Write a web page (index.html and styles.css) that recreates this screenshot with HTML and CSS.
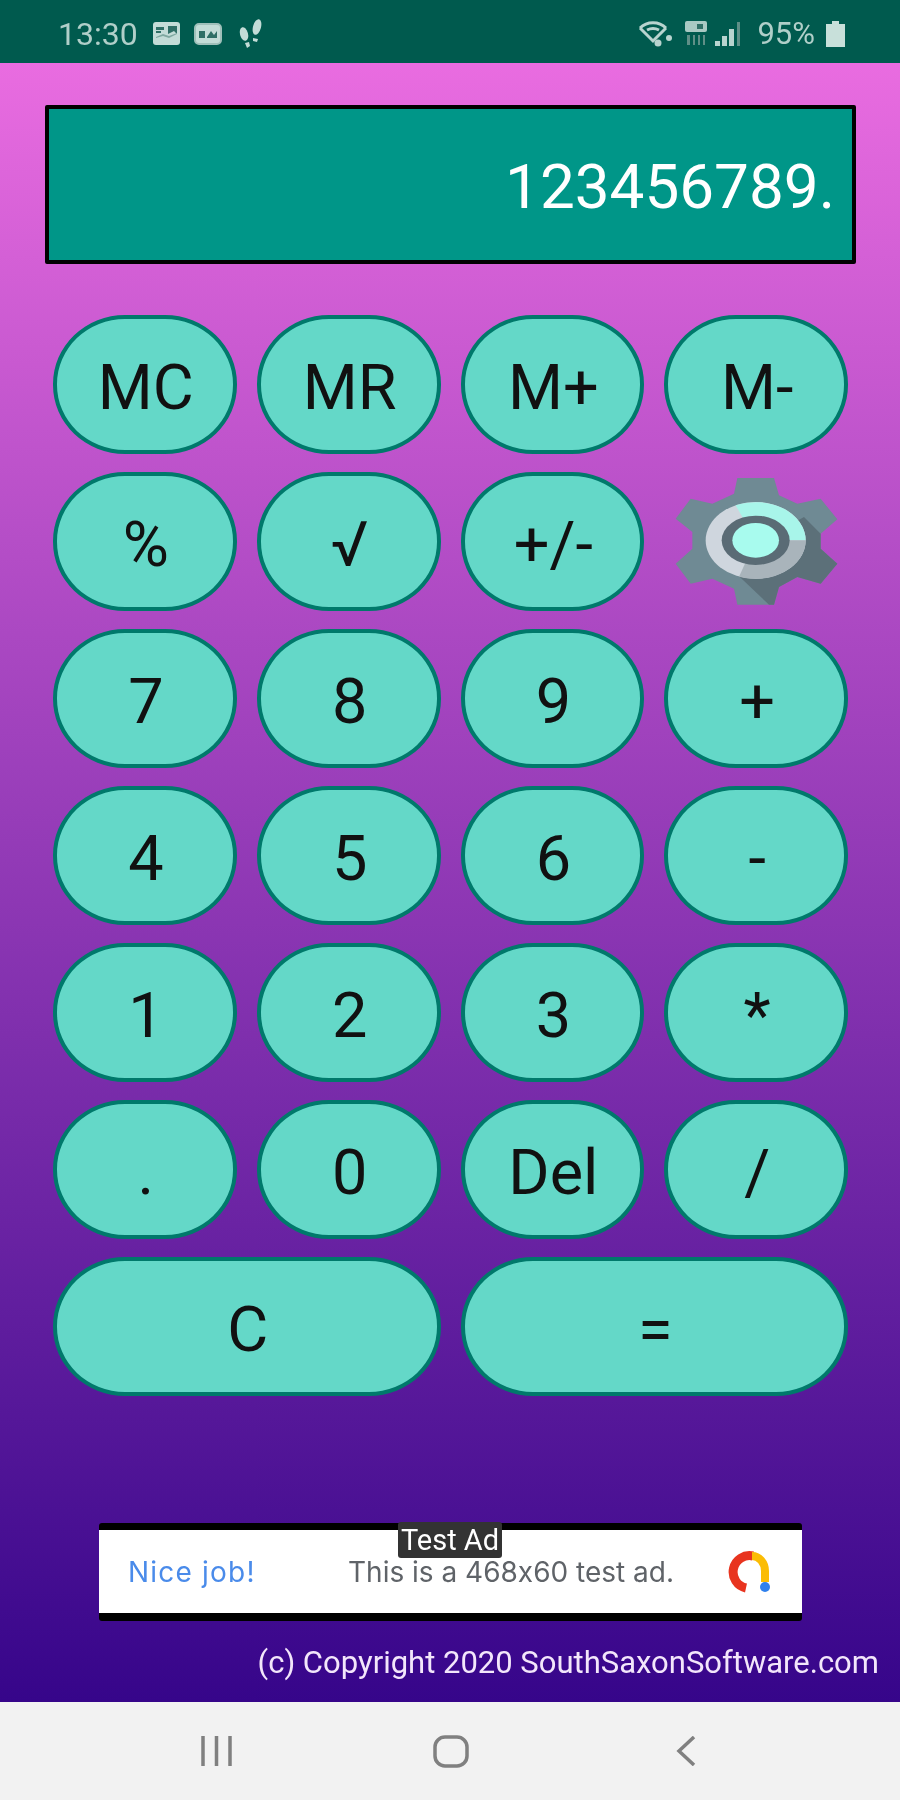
FILE: index.html
```html
<!DOCTYPE html>
<html lang="en">
<head>
<meta charset="utf-8">
<title>Calculator</title>
<link rel="stylesheet" href="styles.css">
</head>
<body>
<div class="phone">
  <header class="status">
    <div class="status-left">
      <span class="time">13:30</span>
      <svg class="ic ic-img" viewBox="0 0 27 23"><rect width="27" height="23" rx="3" fill="#c3dcd7"/><path d="M3 5h8v3H3zM3 9h5v2H3zM15 4h9v8l-3-3-6 3z" fill="#2f6f66"/><path d="M3 15l7-3 6 2 8-3v1l-8 4-6-2-7 2z" fill="#7fa8a0"/></svg>
      <svg class="ic ic-mail" viewBox="0 0 28 22"><rect x="1" y="1" width="26" height="20" rx="4" fill="#c3dcd7" stroke="#9fc0ba" stroke-width="2"/><path d="M5 8h6v7H5zM13 14l4-6 3 4 3-4v7h-10z" fill="#2f6f66"/></svg>
      <svg class="ic ic-feet" viewBox="0 0 27 30"><ellipse cx="19" cy="8" rx="4" ry="8" transform="rotate(15 19 8)" fill="#c3dcd7"/><path d="M15 19l5 1-1 3-4-1z" fill="#c3dcd7"/><ellipse cx="6" cy="15" rx="4" ry="7" transform="rotate(-15 6 15)" fill="#c3dcd7"/><path d="M7 24l4-1 1 4-3 2z" fill="#c3dcd7"/></svg>
    </div>
    <div class="status-right">
      <svg class="ic ic-wifi" viewBox="0 0 36 26"><path d="M2 7C9 0 21 0 28 7" fill="none" stroke="#b8d4cf" stroke-width="3"/><path d="M2 7L15 20 28 7" fill="none" stroke="#b8d4cf" stroke-width="3"/><path d="M9 9c4-2 8-2 12 0" fill="none" stroke="#b8d4cf" stroke-width="3"/><circle cx="20" cy="22" r="3.500" fill="#b8d4cf"/><circle cx="31" cy="17" r="3" fill="#b8d4cf"/></svg>
      <svg class="ic ic-sim" viewBox="0 0 22 25"><rect y="0" width="22" height="11" rx="2" fill="#a9c9c3"/><rect x="12" y="3" width="6" height="5" fill="#2f6f66"/><path d="M2 14h3v10H2zM8 14h2v10H8zM13 14h2v10h-2zM18 14h2v10h-2z" fill="#5f8f87"/></svg>
      <svg class="ic ic-signal" viewBox="0 0 27 24"><path d="M0 19h5v5H0zM7 14h5v10H7zM14 7h5v17h-5z" fill="#b8d4cf"/><path d="M22 0h3v24h-3z" fill="#5f8f87"/></svg>
      <span class="pct">95%</span>
      <svg class="ic ic-batt" viewBox="0 0 19 26"><path d="M6 0h7v3h6v23H0V3h6z" fill="#c8e0da"/></svg>
    </div>
  </header>

  <main class="app">
    <div class="display">123456789.</div>

    <div class="keys">
      <button class="key">MC</button>
      <button class="key">MR</button>
      <button class="key">M+</button>
      <button class="key">M-</button>
      <button class="key">%</button>
      <button class="key">√</button>
      <button class="key">+/-</button>
      <div class="gear">
        <svg viewBox="100 85 495 390" width="165" height="130">
          <path fill="#6f8a94" d="M290 88H400L415 140 470 165 540 150 590 212 540 255V300L590 345 540 405 470 385 415 415 400 468H290L280 420 215 390 150 405 105 345 155 300V250L105 210 150 150 215 165 280 135Z"/>
          <path fill="#5c7079" d="M490 205L540 255V300L590 345 540 405 470 385 415 415 400 468H385L250 340Z"/>
          <ellipse cx="345" cy="275" rx="150" ry="115" fill="#cfd6de"/>
          <path fill="#a8f5ea" d="M345 275L285 170A150 115 0 0 1 495 275Z"/>
          <path fill="#a9b4bb" d="M345 275L495 275A150 115 0 0 1 295 384Z"/>
          <ellipse cx="345" cy="275" rx="102" ry="74" fill="#5a6b75"/>
          <ellipse cx="345" cy="275" rx="70" ry="52" fill="#a8fbee"/>
        </svg>
      </div>
      <button class="key">7</button>
      <button class="key">8</button>
      <button class="key">9</button>
      <button class="key">+</button>
      <button class="key">4</button>
      <button class="key">5</button>
      <button class="key">6</button>
      <button class="key">-</button>
      <button class="key">1</button>
      <button class="key">2</button>
      <button class="key">3</button>
      <button class="key">*</button>
      <button class="key">.</button>
      <button class="key">0</button>
      <button class="key">Del</button>
      <button class="key">/</button>
      <button class="key wide">C</button>
      <button class="key wide">=</button>
    </div>

    <div class="ad">
      <span class="ad-tag">Test Ad</span>
      <span class="ad-title">Nice job!</span>
      <span class="ad-text">This is a 468x60 test ad.</span>
      <svg class="ad-logo" viewBox="0 0 44 44">
        <path d="M26 6A16 16 0 0 0 19 38" fill="none" stroke="#e8341f" stroke-width="9"/>
        <path d="M25 6A13 15 0 0 1 38 21V32" fill="none" stroke="#fbbc04" stroke-width="8"/>
        <circle cx="38" cy="37" r="5" fill="#2f80ed"/>
      </svg>
    </div>

    <p class="copy">(c) Copyright 2020 SouthSaxonSoftware.com</p>
  </main>

  <nav class="nav">
    <svg class="nav-ic" width="31" height="30" viewBox="0 0 31 30"><path d="M2 0v30M15.500 0v30M29 0v30" stroke="#808080" stroke-width="3.500" fill="none"/></svg>
    <svg class="nav-ic" width="36" height="33" viewBox="0 0 36 33"><rect x="2" y="2" width="32" height="29" rx="10" fill="none" stroke="#808080" stroke-width="3.500"/></svg>
    <svg class="nav-ic" width="20" height="30" viewBox="0 0 20 30"><path d="M18 1L3 15l15 14" fill="none" stroke="#808080" stroke-width="3.500"/></svg>
  </nav>
</div>
</body>
</html>
```

FILE: styles.css
```css
* { box-sizing: border-box; }
html, body { margin: 0; padding: 0; background: #f2f2f2; }
body { font-family: Roboto, "Liberation Sans", sans-serif; }

.phone {
  width: 900px;
  height: 1800px;
  display: flex;
  flex-direction: column;
  overflow: hidden;
  filter: blur(0.7px);
}

.status {
  height: 63px;
  background: #005a4e;
  color: #b0cfc9;
  display: flex;
  justify-content: space-between;
  align-items: center;
  padding: 4px 55px 0 58px;
}
.status-left, .status-right { display: flex; align-items: center; }
.time { font-size: 32px; line-height: 1; width: 80px; }
.pct { font-size: 31px; line-height: 1; margin-left: 15px; margin-right: 11px; }
.ic { display: block; }
.ic-img { width: 27px; height: 23px; margin-left: 15px; }
.ic-mail { width: 28px; height: 22px; margin-left: 14px; }
.ic-feet { width: 27px; height: 30px; margin-left: 16px; }
.ic-wifi { width: 36px; height: 26px; }
.ic-sim { width: 22px; height: 25px; margin-left: 11px; }
.ic-signal { width: 27px; height: 24px; margin-left: 8px; }
.ic-batt { width: 19px; height: 26px; }

.app {
  flex: 1;
  background: linear-gradient(#e96ce0, #36058a);
  padding-top: 42px;
  display: flex;
  flex-direction: column;
}

.display {
  width: 811px;
  height: 159px;
  margin-left: 45px;
  background: #009688;
  border: 4px solid #000;
  border-radius: 2px;
  color: #fff;
  font-size: 62px;
  line-height: 155px;
  padding-right: 17px;
  text-align: right;
}

.keys {
  margin: 51px 52px 0 53px;
  display: grid;
  grid-template-columns: repeat(4, 1fr);
  grid-auto-rows: 139px;
  column-gap: 20px;
  row-gap: 18px;
}
.key {
  background: #64d8c8;
  border: 4px solid #00796b;
  border-radius: 72px / 69px;
  color: #111;
  font-family: inherit;
  font-size: 63px;
  line-height: 1;
  padding: 5px 0 0 2px;
}
.wide { grid-column: span 2; }
.gear { display: flex; align-items: center; justify-content: center; }

.ad {
  position: relative;
  width: 703px;
  height: 98px;
  margin: 127px 0 0 99px;
  background: #fff;
  border-top: 7px solid #000;
  border-bottom: 8px solid #000;
  border-radius: 3px;
  display: flex;
  align-items: center;
  padding-left: 29px;
}
.ad-tag {
  position: absolute;
  top: -8px;
  left: 299px;
  width: 104px;
  height: 36px;
  background: #333;
  border-radius: 3px;
  color: #fff;
  font-size: 29px;
  line-height: 36px;
  text-align: center;
}
.ad-title { color: #4a8bea; font-size: 28px; width: 220px; font-family: Inter, sans-serif; font-feature-settings: "calt" 0; letter-spacing: 1.2px; }
.ad-text { color: #5f6368; font-size: 28px; width: 379px; font-family: Inter, sans-serif; font-feature-settings: "calt" 0; }
.ad-logo { width: 44px; height: 44px; }

.copy {
  margin: 26px 21px 0 0;
  color: #f3e6fb;
  font-size: 31px;
  line-height: 32px;
  text-align: right;
}

.nav {
  height: 98px;
  background: #f2f2f2;
  display: flex;
  align-items: center;
  padding-left: 201px;
}
.nav-ic:nth-child(2) { margin-left: 201px; }
.nav-ic:nth-child(3) { margin-left: 207px; }
```
